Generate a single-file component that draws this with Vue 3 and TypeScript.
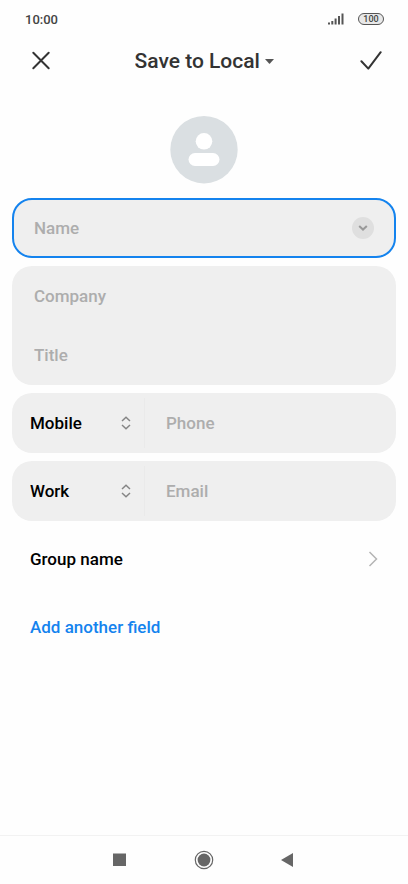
<script setup lang="ts">
import { reactive, ref } from 'vue'

interface TypedField {
  id: string
  kind: string
  kinds: string[]
  placeholder: string
  inputType: string
  value: string
}

const account = ref('Save to Local')
const name = ref('')
const company = ref('')
const jobTitle = ref('')

const typedFields = reactive<TypedField[]>([
  { id: 'phone', kind: 'Mobile', kinds: ['Mobile', 'Home', 'Work'], placeholder: 'Phone', inputType: 'tel', value: '' },
  { id: 'email', kind: 'Work', kinds: ['Work', 'Home', 'Other'], placeholder: 'Email', inputType: 'email', value: '' },
])
</script>

<template>
  <div class="screen">
    <div class="status">
      <span class="time">10:00</span>
      <div class="indicators">
        <svg class="signal" width="16" height="12" viewBox="0 0 16 12" aria-hidden="true">
          <path d="M0 9.500h2v2H0zM3.300 8h2v3.500h-2zM6.600 5.500h2v6h-2zM10 3h2v8.500h-2zM13.500 .5h2v11h-2z" />
        </svg>
        <span class="battery">100</span>
      </div>
    </div>

    <header class="header">
      <button class="icon-button" type="button" aria-label="Cancel">
        <svg width="22" height="22" viewBox="0 0 22 22" aria-hidden="true">
          <path d="M3.300 2.800L18.700 18.200M18.700 2.800L3.300 18.200" />
        </svg>
      </button>
      <div class="account">
        <select v-model="account" class="account-select" aria-label="Account">
          <option>Save to Local</option>
        </select>
        <svg class="caret" width="9" height="5" viewBox="0 0 9 5" aria-hidden="true">
          <path d="M0 0h9L5 4.600q-.5.500-1 0z" />
        </svg>
      </div>
      <button class="icon-button confirm" type="button" aria-label="Save">
        <svg width="22" height="22" viewBox="0 0 22 22" aria-hidden="true">
          <path d="M1.400 11.300L8.300 18.600L20.700 2.200" />
        </svg>
      </button>
    </header>

    <form class="form" @submit.prevent>
      <button class="avatar" type="button" aria-label="Add photo">
        <svg width="68" height="68" viewBox="0 0 68 68" aria-hidden="true">
          <circle cx="34" cy="33.700" r="33.700" fill="#dadfe2" />
          <circle cx="34" cy="25.300" r="8.300" fill="#fff" />
          <rect x="18.500" y="37" width="31" height="13" rx="6.500" fill="#fff" />
        </svg>
      </button>

      <div class="card focused">
        <input v-model="name" class="field inset" type="text" placeholder="Name" aria-label="Name" />
        <button class="expand" type="button" aria-label="More name fields">
          <svg width="10" height="6" viewBox="0 0 10 6" aria-hidden="true">
            <path d="M1.200 1L5 4.600L8.800 1" />
          </svg>
        </button>
      </div>

      <div class="card stacked">
        <input v-model="company" class="field inset" type="text" placeholder="Company" aria-label="Company" />
        <input v-model="jobTitle" class="field inset" type="text" placeholder="Title" aria-label="Title" />
      </div>

      <div v-for="field in typedFields" :key="field.id" class="card">
        <div class="kind">
          <select v-model="field.kind" class="kind-select" :aria-label="field.placeholder + ' type'">
            <option v-for="kind in field.kinds" :key="kind">{{ kind }}</option>
          </select>
          <svg class="updown" width="10" height="14" viewBox="0 0 10 14" aria-hidden="true">
            <path d="M1 5L5 1.300L9 5M1 9L5 12.700L9 9" />
          </svg>
        </div>
        <input v-model="field.value" class="field typed" :type="field.inputType" :placeholder="field.placeholder" :aria-label="field.placeholder" />
      </div>

      <button class="row" type="button">
        <span>Group name</span>
        <svg width="10" height="16" viewBox="0 0 10 16" aria-hidden="true">
          <path d="M1.500 1L8.500 8L1.500 15" />
        </svg>
      </button>
      <button class="row add" type="button">Add another field</button>
    </form>

    <nav class="nav" aria-label="System">
      <button type="button" aria-label="Recent apps">
        <svg width="20" height="20" viewBox="0 0 20 20" aria-hidden="true">
          <rect x="3" y="3.500" width="13" height="12.500" fill="#666" />
        </svg>
      </button>
      <button type="button" aria-label="Home">
        <svg width="20" height="20" viewBox="0 0 20 20" aria-hidden="true">
          <circle cx="10" cy="10" r="8.700" fill="none" stroke="#666" stroke-width="1.200" />
          <circle cx="10" cy="10" r="6.400" fill="#666" />
        </svg>
      </button>
      <button type="button" aria-label="Back">
        <svg width="20" height="20" viewBox="0 0 20 20" aria-hidden="true">
          <path d="M15 3v14L3 10z" fill="#666" />
        </svg>
      </button>
    </nav>
  </div>
</template>

<style>
body {
  margin: 0;
  background: #fefefe;
}
</style>

<style scoped>
.screen {
  display: flex;
  flex-direction: column;
  min-height: 100vh;
  background: #fefefe;
  color: #000;
  font-family: Roboto, 'Liberation Sans', sans-serif;
  font-size: 17px;
  font-weight: 500;
}

button,
input,
select {
  margin: 0;
  padding: 0;
  border: 0;
  background: none;
  color: inherit;
  font: inherit;
  outline: none;
  appearance: none;
}

button,
select {
  cursor: pointer;
}

svg {
  display: block;
}

.status {
  display: flex;
  align-items: center;
  justify-content: space-between;
  height: 38px;
  padding: 0 24px 0 25px;
  box-sizing: border-box;
  color: #444;
}

.time {
  font-size: 13px;
}

.indicators {
  display: flex;
  align-items: center;
  gap: 14px;
}

.signal {
  fill: #555;
}

.battery {
  box-sizing: border-box;
  width: 26px;
  height: 12px;
  border: 1px solid #555;
  border-radius: 6px;
  background: #e8e8e8;
  font-size: 9px;
  line-height: 10px;
  text-align: center;
}

.header {
  display: grid;
  grid-template-columns: 1fr auto 1fr;
  align-items: center;
  height: 46px;
  padding: 0 20px;
}

.icon-button {
  display: grid;
  place-items: center;
  width: 42px;
  height: 42px;
}

.confirm {
  justify-self: end;
  width: 34px;
}

.icon-button path {
  fill: none;
  stroke: #333;
  stroke-width: 2;
  stroke-linecap: round;
  stroke-linejoin: round;
}

.account {
  display: grid;
  align-items: center;
}

.account-select,
.caret {
  grid-area: 1 / 1;
}

.account-select {
  padding-right: 13px;
  color: #333;
  font-size: 21px;
  line-height: 28px;
}

.caret {
  justify-self: end;
  fill: #555;
  pointer-events: none;
}

.form {
  display: flex;
  flex-direction: column;
  gap: 8px;
  padding: 32px 12px 24px;
}

.avatar {
  align-self: center;
  margin-bottom: 6px;
  border-radius: 50%;
}

.card {
  display: flex;
  align-items: center;
  box-sizing: border-box;
  min-height: 60px;
  border-radius: 20px;
  background: #efefef;
}

.focused {
  padding-right: 20px;
  border: 2px solid #1483ee;
}

.stacked {
  flex-direction: column;
  align-items: stretch;
  justify-content: space-around;
  min-height: 119px;
}

.field {
  flex: 1;
  min-width: 0;
}

.field::placeholder {
  color: #adadad;
  opacity: 1;
}

.inset {
  padding-left: 22px;
}

.focused .inset {
  padding-left: 20px;
}

.typed {
  padding: 0 21px;
}

.expand {
  display: grid;
  place-items: center;
  width: 22px;
  height: 22px;
  border-radius: 50%;
  background: #dfdfdf;
}

.expand path {
  fill: none;
  stroke: #999;
  stroke-width: 2;
}

.kind {
  display: grid;
  align-items: center;
  width: 133px;
  height: 50px;
  box-sizing: border-box;
  border-right: 1px solid #eaeaea;
}

.kind-select,
.updown {
  grid-area: 1 / 1;
}

.kind-select {
  height: 50px;
  padding-left: 18px;
}

.updown {
  justify-self: end;
  margin-right: 13px;
  fill: none;
  stroke: #858585;
  stroke-width: 1.500;
  pointer-events: none;
}

.row {
  display: flex;
  align-items: center;
  justify-content: space-between;
  height: 60px;
  padding: 0 18px;
  text-align: left;
}

.row path {
  fill: none;
  stroke: #b5b5b5;
  stroke-width: 1.500;
}

.add {
  color: #1483ee;
}

.nav {
  display: grid;
  grid-template-columns: repeat(3, 84px);
  justify-content: center;
  height: 48px;
  margin-top: auto;
  border-top: 1px solid #f2f2f2;
}

.nav button {
  display: grid;
  place-items: center;
}
</style>
